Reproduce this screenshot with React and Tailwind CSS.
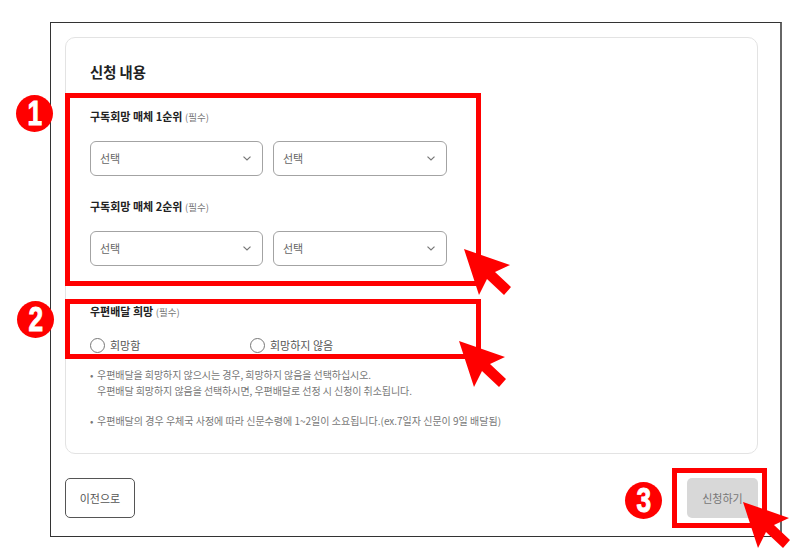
import React from "react";

const SelectBox = () => (
  <div className="flex h-[35px] items-center justify-between rounded-[6px] border border-[#a3a3a3] pl-[9px] pr-[11px] text-[11px] text-[#666]">
    <span>선택</span>
    <svg width="8" height="5" viewBox="0 0 8 5" fill="none" stroke="#777" strokeWidth="1.2">
      <path d="M.5.6 4 4 7.5.6" />
    </svg>
  </div>
);

const MediaField = ({ label, className }) => (
  <div className={className}>
    <p className="text-[11px] leading-4 font-bold text-[#222]">
      {label} <span className="text-[9.5px] font-normal text-[#777]">(필수)</span>
    </p>
    <div className="mt-4 grid w-[357px] grid-cols-[173px_174px] gap-[10px]">
      <SelectBox />
      <SelectBox />
    </div>
  </div>
);

const Radio = ({ label, className }) => (
  <label className={`flex items-center gap-[5px] text-[11px] text-[#555] ${className}`}>
    <span className="h-[15px] w-[15px] rounded-full border border-[#777]" />
    {label}
  </label>
);

const Cursor = ({ className }) => (
  <svg className={`absolute ${className}`} width="49" height="48" viewBox="0 0 49 48" fill="#ff0000">
    <path d="M0 0 46 16 31 23 47 38 40 46 23 30 15 46Z" />
  </svg>
);

const Badge = ({ num, className }) => (
  <div className={`absolute flex h-[37px] w-[37px] items-center justify-center rounded-full bg-[#ff0000] text-[35px] font-bold text-white ${className}`}>
    <span
      className="scale-x-[.75] [-webkit-text-stroke:1px_white]"
      style={{ fontFamily: "'Liberation Sans', sans-serif" }}
    >
      {num}
    </span>
  </div>
);

const App = () => {
  return (
    <div
      className="relative h-[558px] w-[802px] overflow-hidden bg-white pl-[50px] pt-[22px]"
      style={{ fontFamily: "'Noto Sans CJK KR', 'Noto Sans', sans-serif" }}
    >
      <div className="h-[515px] w-[732px] border border-r-2 border-[#333] border-r-[#666] px-[14px] pt-[14px]">
        <div className="h-[417px] w-[693px] rounded-[10px] border border-[#e3e3e3] pl-[24px] pt-[23px]">
          <h2 className="text-[14.3px] leading-[22px] font-bold text-[#222]">신청 내용</h2>
          <MediaField label="구독회망 매체 1순위" className="mt-[25px]" />
          <MediaField label="구독회망 매체 2순위" className="mt-[22px]" />
          <p className="mt-[37px] text-[11px] leading-4 font-bold text-[#222]">
            우편배달 희망 <span className="text-[9.5px] font-normal text-[#777]">(필수)</span>
          </p>
          <div className="mt-[17px] flex">
            <Radio label="회망함" className="w-[160px]" />
            <Radio label="회망하지 않음" />
          </div>
          <ul className="mt-[13px] text-[10px] leading-4 text-[#777]">
            <li className="relative pl-[7px] tracking-[-0.07px]">
              <span className="absolute left-0">•</span>
              우편배달을 희망하지 않으시는 경우, 희망하지 않음을 선택하십시오.
              <br />
              우편배달 희망하지 않음을 선택하시면, 우편배달로 선정 시 신청이 취소됩니다.
            </li>
            <li className="relative mt-[14px] pl-[7px]">
              <span className="absolute left-0">•</span>
              우편배달의 경우 우체국 사정에 따라 신문수령에 1~2일이 소요됩니다.(ex.7일자 신문이 9일 배달됨)
            </li>
          </ul>
        </div>
        <div className="mt-[24px] flex w-[693px] justify-between">
          <button className="h-[40px] w-[70px] rounded-[5px] border border-[#555] text-[11px] text-[#555]">이전으로</button>
          <button className="h-[40px] w-[71px] rounded-[5px] bg-[#d8d8d8] text-[11px] text-[#777]">신청하기</button>
        </div>
      </div>

      <div className="absolute left-[65px] top-[93px] h-[193px] w-[416px] border-[5px] border-[#ff0000]" />
      <div className="absolute left-[65px] top-[299px] h-[60px] w-[416px] border-[5px] border-[#ff0000]" />
      <div className="absolute left-[672px] top-[468px] h-[60px] w-[95px] border-[5px] border-[#ff0000]" />

      <Cursor className="left-[464px] top-[249px]" />
      <Cursor className="left-[459px] top-[341px]" />
      <Cursor className="left-[743px] top-[502px]" />

      <Badge num="1" className="left-[16px] top-[95px]" />
      <Badge num="2" className="left-[17px] top-[301px]" />
      <Badge num="3" className="left-[625px] top-[482px]" />
    </div>
  );
};

export default App;
